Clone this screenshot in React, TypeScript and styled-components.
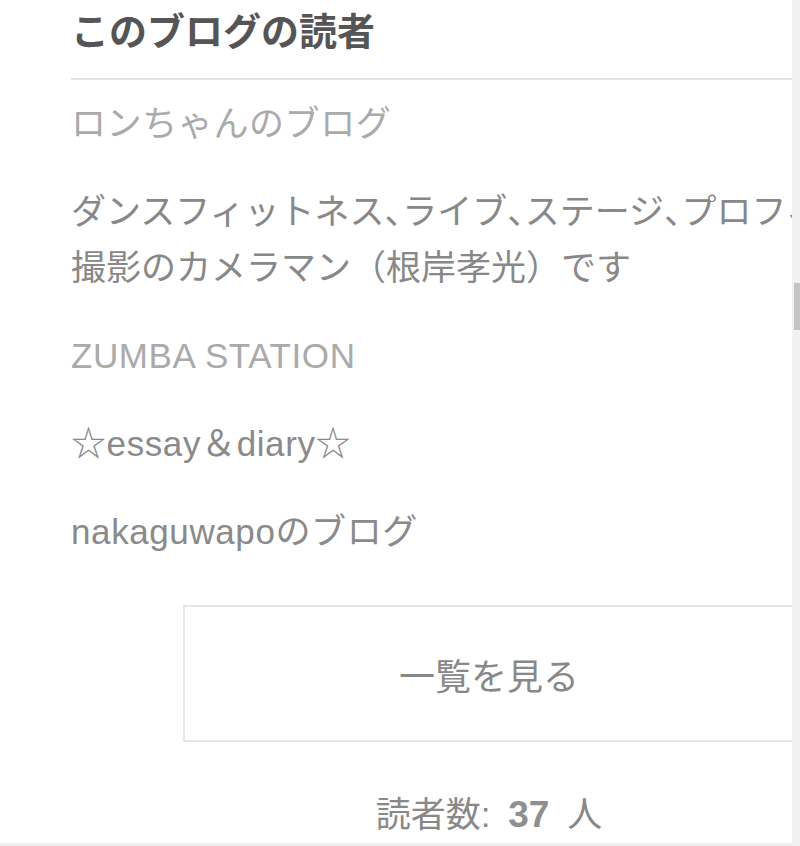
import React from 'react';
import styled, { createGlobalStyle } from 'styled-components';

const GlobalStyle = createGlobalStyle`
  html,
  body {
    margin: 0;
    padding: 0;
    background: #ffffff;
  }
  body {
    font-family: 'Liberation Sans', 'Noto Sans CJK JP', sans-serif;
    overflow: hidden;
  }
`;

const PageStyled = styled.div`
  display: flex;
  width: 800px;
  height: 846px;
  overflow: hidden;
`;

const MainStyled = styled.main`
  flex: 1;
  display: flex;
  flex-direction: column;
  overflow: hidden;
  border-bottom: 3px solid #eeeeee;
`;

const ScrollTrackStyled = styled.div`
  flex: 0 0 6px;
  background: #f1f1f1;
  padding-top: 283px;
  padding-left: 2px;
`;

const ScrollThumbStyled = styled.div`
  height: 47px;
  background: #c4c4c4;
`;

const WidgetStyled = styled.section`
  flex-shrink: 0;
  width: 836px;
  margin-left: 71px;
`;

const TitleHeaderStyled = styled.h2`
  margin: 0;
  padding: 4px 0 18px;
  font-size: 38px;
  line-height: 56px;
  font-weight: 700;
  color: #555555;
  border-bottom: 2px solid #e4e4e4;
`;

const ListStyled = styled.div`
  display: flex;
  flex-direction: column;
  gap: 32px;
  padding-top: 16px;
`;

export const BlogLinkStyled = styled.a<{ $light?: boolean }>`
  display: block;
  font-size: 35px;
  line-height: 56px;
  letter-spacing: 0.6px;
  white-space: nowrap;
  color: ${(p) => (p.$light ? '#aaaaaa' : '#8a8a8a')};
  text-decoration: none;
`;

const DescriptionStyled = styled.p`
  margin: 0;
  font-size: 35px;
  line-height: 56px;
  color: #888888;
  white-space: nowrap;
`;

// 読点は半角幅に詰める
const CommaStyled = styled.span`
  letter-spacing: -0.5em;
`;

const MoreButtonStyled = styled.a`
  display: flex;
  align-items: center;
  justify-content: center;
  box-sizing: border-box;
  width: 612px;
  height: 137px;
  margin: 45px 0 0 112px;
  border: 2px solid #e6e6e6;
  font-size: 36px;
  color: #888888;
  text-decoration: none;
`;

const CountStyled = styled.p`
  margin: 45px 0 0;
  text-align: center;
  font-size: 35px;
  line-height: 56px;
  word-spacing: 8px;
  color: #888888;
`;

const CountNumberStyled = styled.span`
  font-size: 37px;
  font-weight: 700;
  color: #8f8f8f;
`;

interface ReaderBlog {
  name: string;
  light?: boolean;
  description?: string[];
}

const readers: ReaderBlog[] = [
  {
    name: 'ロンちゃんのブログ',
    light: true,
    description: [
      'ダンスフィットネス、ライブ、ステージ、プロフィール',
      '撮影のカメラマン（根岸孝光）です',
    ],
  },
  { name: 'ZUMBA STATION', light: true },
  { name: '☆essay＆diary☆' },
  { name: 'nakaguwapoのブログ' },
];

function withCommas(text: string) {
  return text.split('、').map((part, idx, all) => (
    <React.Fragment key={idx}>
      {part}
      {idx < all.length - 1 && <CommaStyled>、</CommaStyled>}
    </React.Fragment>
  ));
}

export default function App() {
  return (
    <>
      <GlobalStyle />
      <PageStyled>
        <MainStyled>
          <WidgetStyled>
            <TitleHeaderStyled>このブログの読者</TitleHeaderStyled>
            <ListStyled>
              {readers.map((item) => (
                <React.Fragment key={item.name}>
                  <BlogLinkStyled href="#" $light={item.light}>
                    {item.name}
                  </BlogLinkStyled>
                  {item.description && (
                    <DescriptionStyled>
                      {item.description.map((line, idx) => (
                        <React.Fragment key={idx}>
                          {idx > 0 && <br />}
                          {withCommas(line)}
                        </React.Fragment>
                      ))}
                    </DescriptionStyled>
                  )}
                </React.Fragment>
              ))}
            </ListStyled>
            <MoreButtonStyled href="#">一覧を見る</MoreButtonStyled>
            <CountStyled>
              読者数: <CountNumberStyled>37</CountNumberStyled> 人
            </CountStyled>
          </WidgetStyled>
        </MainStyled>
        <ScrollTrackStyled>
          <ScrollThumbStyled />
        </ScrollTrackStyled>
      </PageStyled>
    </>
  );
}
